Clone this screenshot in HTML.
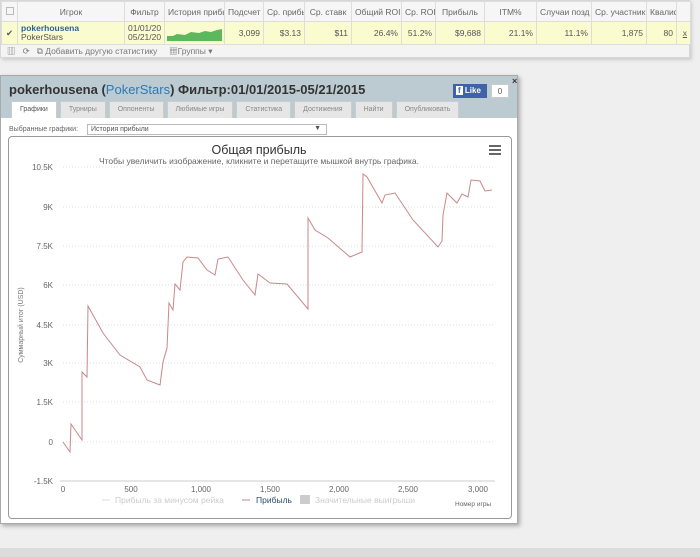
<!DOCTYPE html>
<html><head><meta charset="utf-8"><style>
*{box-sizing:border-box;margin:0;padding:0}
body{width:700px;height:557px;background:#efefef;font-family:"Liberation Sans","Noto Sans CJK SC",sans-serif;position:relative;overflow:hidden;font-size:8px;color:#555}
.top{position:absolute;left:0;top:0;width:690px;height:58px;background:#f4f4f4;border:1px solid #d8d8d8;box-shadow:2px 2px 3px #ccc}
table{border-collapse:collapse;position:absolute;left:0;top:0;width:689px;table-layout:fixed}
td{border:1px solid #ddd;height:20px;padding:0 3px;white-space:nowrap;overflow:hidden;font-size:8.5px}
.hd td{background:#f6f6f6;text-align:center;color:#666}
.rw td{background:#fbfbd0;text-align:right;color:#555}
.tb{position:absolute;left:6px;top:44px;font-size:8.5px;color:#777}
.dlg{position:absolute;left:0;top:75px;width:518px;height:449px;background:#fff;border:1px solid #aaa;box-shadow:2px 2px 4px #aaa}
.dh{position:absolute;left:0;top:0;width:516px;height:42px;background:#bccbd2}
.ttl{position:absolute;left:8px;top:6px;font-size:13px;font-weight:bold;color:#333}
.ttl span{color:#2a7ab8;font-weight:normal}
.tabs{position:absolute;left:10px;top:25px;display:flex;gap:3px}
.tabs div{height:17px;background:#e6e6e6;border:1px solid #ccc;border-bottom:none;font-size:7px;color:#888;padding:4px 8px 0}
.tabs div.a{background:#fff;color:#555}
.fb{position:absolute;left:452px;top:8px;width:34px;height:14px;background:#4062a8;color:#fff;font-size:8px;font-weight:bold;padding:2px 3px}
.cnt{position:absolute;left:490px;top:8px;width:18px;height:14px;background:#fff;border:1px solid #ccc;font-size:8px;text-align:center;padding-top:2px}
.cls{position:absolute;left:511px;top:0;font-size:9px;font-weight:bold;color:#333}
.sel{position:absolute;left:8px;top:50px;font-size:7px;color:#666}
.box{position:absolute;left:86px;top:48px;width:240px;height:11px;border:1px solid #bbb;font-size:7px;padding:1px 3px}
.chart{position:absolute;left:7px;top:60px;width:504px;height:383px;border:1px solid #999;border-radius:4px}
</style></head><body>
<div class="top">
<table>
<colgroup><col style="width:16px"><col style="width:107px"><col style="width:40px"><col style="width:60px"><col style="width:39px"><col style="width:41px"><col style="width:47px"><col style="width:50px"><col style="width:34px"><col style="width:49px"><col style="width:52px"><col style="width:55px"><col style="width:55px"><col style="width:30px"><col style="width:14px"></colgroup>
<tr class="hd"><td><span style="display:inline-block;width:8px;height:8px;border:1px solid #bbb"></span></td><td>Игрок</td><td>Фильтр</td><td>История прибы</td><td>Подсчет</td><td>Ср. прибь</td><td>Ср. ставк</td><td>Общий ROI</td><td>Ср. ROI</td><td>Прибыль</td><td>ITM%</td><td>Случаи позд</td><td>Ср. участник</td><td>Квалиф</td><td></td></tr>
<tr class="rw"><td style="text-align:center">✔</td><td style="text-align:left;line-height:9px"><b style="color:#2a6496">pokerhousena</b><br>PokerStars</td><td style="text-align:left;line-height:9px">01/01/20<br>05/21/20</td><td style="padding:0"><svg width="60" height="20"><path d="M2,19 L2,14 8,14 12,12 20,13 26,10 34,11 40,9 46,10 52,8 57,7 57,19Z" fill="#5cb85c"/></svg></td><td>3,099</td><td>$3.13</td><td>$11</td><td>26.4%</td><td>51.2%</td><td>$9,688</td><td>21.1%</td><td>11.1%</td><td>1,875</td><td>80</td><td style="text-decoration:underline">x</td></tr>
</table>
<div class="tb">▥ &nbsp; ⟳ &nbsp; ⧉ Добавить другую статистику &nbsp; &nbsp; ▦Группы ▾</div>
</div>
<div style="position:absolute;left:0;top:548px;width:700px;height:9px;background:#dcdcdc"></div>
<div class="dlg">
<div class="dh">
<div class="ttl">pokerhousena (<span>PokerStars</span>) Фильтр:01/01/2015-05/21/2015</div>
<div class="tabs"><div class="a">Графики</div><div>Турниры</div><div>Оппоненты</div><div>Любимые игры</div><div>Статистика</div><div>Достижения</div><div>Найти</div><div>Опубликовать</div></div>
<div class="fb"><span style="background:#fff;color:#4062a8;padding:0 2px">f</span> Like</div>
<div class="cnt">0</div>
<div class="cls">×</div>
</div>
<div class="sel">Выбранные графики:</div>
<div class="box">История прибыли<span style="position:absolute;right:5px;top:0">▼</span></div>
<div class="chart"></div>
</div>
<svg style="position:absolute;left:0;top:0" width="700" height="557" font-family="Liberation Sans,Noto Sans CJK SC,sans-serif">
<g stroke="#ddd" stroke-dasharray="1,2">
<line x1="63" x2="495" y1="167" y2="167"/><line x1="63" x2="495" y1="207" y2="207"/><line x1="63" x2="495" y1="246" y2="246"/><line x1="63" x2="495" y1="285" y2="285"/><line x1="63" x2="495" y1="325" y2="325"/><line x1="63" x2="495" y1="363" y2="363"/><line x1="63" x2="495" y1="402" y2="402"/><line x1="63" x2="495" y1="442" y2="442"/></g>
<line x1="60" x2="495" y1="481" y2="481" stroke="#ccc"/>
<g font-size="8" fill="#666" text-anchor="end"><text x="53" y="170">10.5K</text><text x="53" y="210">9K</text><text x="53" y="249">7.5K</text><text x="53" y="288">6K</text><text x="53" y="328">4.5K</text><text x="53" y="366">3K</text><text x="53" y="405">1.5K</text><text x="53" y="445">0</text><text x="53" y="484">-1.5K</text></g>
<g font-size="8" fill="#666" text-anchor="middle"><text x="63" y="492">0</text><text x="131" y="492">500</text><text x="201" y="492">1,000</text><text x="270" y="492">1,500</text><text x="339" y="492">2,000</text><text x="408" y="492">2,500</text><text x="478" y="492">3,000</text></g>
<text x="23" y="325" font-size="7" fill="#777" transform="rotate(-90 23 325)" text-anchor="middle">Суммарный итог (USD)</text>
<text x="259" y="154" font-size="12.5" fill="#333" text-anchor="middle">Общая прибыль</text>
<text x="259" y="164" font-size="8.5" fill="#666" text-anchor="middle">Чтобы увеличить изображение, кликните и перетащите мышкой внутрь графика.</text>
<g fill="#666"><rect x="489" y="145" width="12" height="2"/><rect x="489" y="149" width="12" height="2"/><rect x="489" y="153" width="12" height="2"/></g>
<path fill="none" stroke="#c9878a" stroke-width="1" d="M63,442 L70,452 L71,424 L82,440 L82,372 L87,377 L88,306 L103,333 L120,355 L140,367 L147,380 L160,385 L163,362 L167,348 L169,303 L173,310 L175,284 L180,290 L183,262 L187,257 L198,258 L207,270 L215,275 L218,259 L228,257 L243,280 L255,295 L258,274 L270,283 L287,284 L308,309 L308,218 L315,230 L328,238 L350,257 L362,252 L363,174 L367,177 L382,203 L385,195 L395,193 L413,220 L438,247 L442,241 L443,215 L447,193 L457,203 L462,194 L468,197 L471,180 L480,181 L485,191 L492,190"/>
<g font-size="8.5"><line x1="102" x2="110" y1="500" y2="500" stroke="#ddd"/><text x="115" y="503" fill="#ccc">Прибыль за минусом рейка</text><line x1="242" x2="250" y1="500" y2="500" stroke="#c9878a"/><text x="256" y="503" fill="#2a4a6a">Прибыль</text><rect x="300" y="495" width="10" height="9" fill="#ccc"/><text x="315" y="503" fill="#ccc">Значительные выигрыши</text></g>
<text x="455" y="506" font-size="6.5" fill="#666">Номер игры</text>
</svg>
</body></html>
